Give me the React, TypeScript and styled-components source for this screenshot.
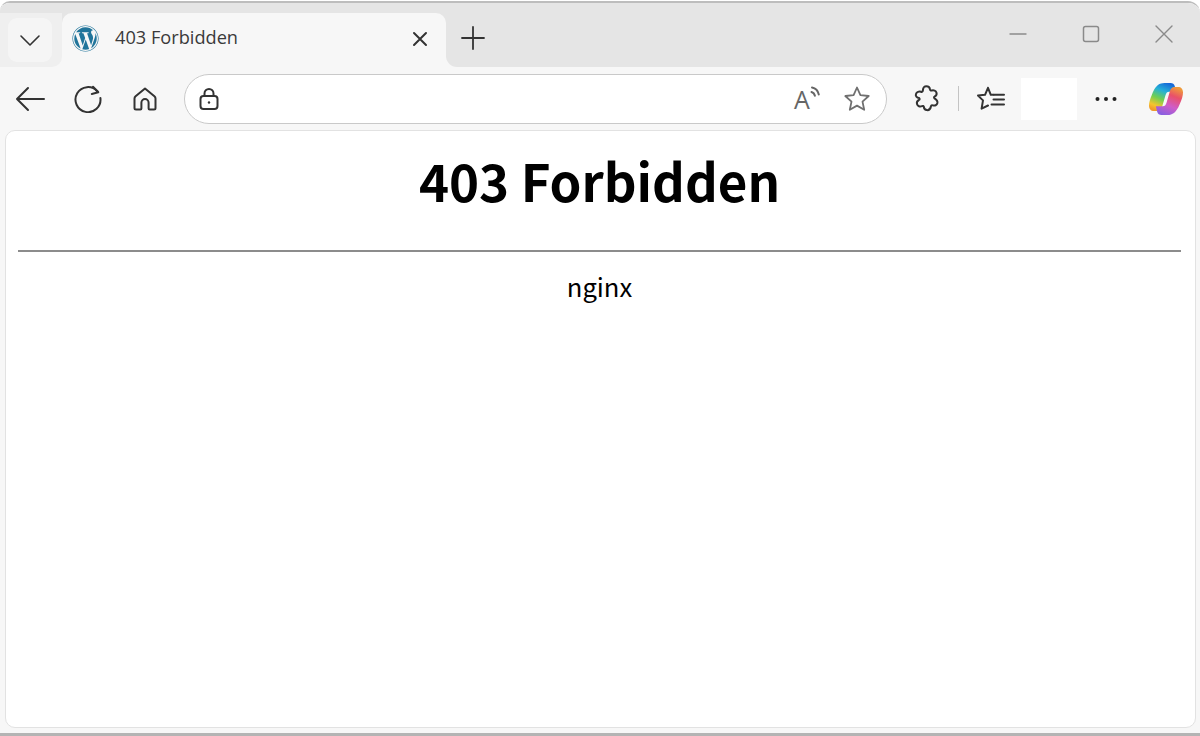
import React from "react";
import styled, { createGlobalStyle } from "styled-components";
import { FaWordpress } from "react-icons/fa";

const Global = createGlobalStyle`
  html, body { margin: 0; padding: 0; background: #ffffff; }
  * { box-sizing: border-box; }
`;

const Screen = styled.div`
  width: 1200px;
  height: 736px;
  overflow: hidden;
  display: flex;
  flex-direction: column;
  padding-top: 1px;
  background: #fff;
`;

const Window = styled.div`
  flex: 1;
  display: flex;
  flex-direction: column;
  background: #f7f7f7;
  border-top: 2px solid #bdbdbd;
  border-bottom: 3px solid #b4b4b4;
  border-radius: 10px 12px 0 0;
  overflow: hidden;
`;

const TitleBar = styled.div`
  height: 64px;
  display: flex;
  background: #f7f7f7;
`;

const Side = styled.div`
  width: 62px;
  background: linear-gradient(#e5e5e5 0 10px, #efefef 10px);
  border-bottom-right-radius: 10px;
  padding: 15px 0 0 8px;
`;

const Switcher = styled.div`
  width: 44px;
  height: 44px;
  border-radius: 9px;
  background: #f5f5f5;
  display: flex;
  align-items: center;
  justify-content: center;
`;

const TabBack = styled.div`
  width: 384px;
  background: #e5e5e5;
  padding-top: 10px;
`;

const Tab = styled.div`
  height: 54px;
  background: #f7f7f7;
  border-radius: 10px 10px 0 0;
  display: flex;
  align-items: center;
  padding: 0 17px 3px 10px;
`;

const TabTitle = styled.span`
  flex: 1;
  margin: 0 0 3px 16px;
  font: 18.2px "Open Sans", sans-serif;
  color: #3a3a3a;
`;

const Strip = styled.div`
  flex: 1;
  background: #e5e5e5;
  border-bottom-left-radius: 11px;
  display: flex;
  align-items: center;
  padding: 6px 24px 0 15px;
`;

const WinControls = styled.div`
  margin-left: auto;
  display: flex;
  gap: 49px;
  margin-bottom: 8px;
`;

const Toolbar = styled.div`
  height: 63px;
  display: flex;
  align-items: center;
  padding-left: 13px;
`;

const Slot = styled.div<{ $ml?: number }>`
  width: 34px;
  height: 34px;
  display: flex;
  align-items: center;
  justify-content: center;
  margin-left: ${(p) => p.$ml ?? 0}px;
  flex: none;
`;

const Address = styled.div`
  width: 703px;
  height: 50px;
  margin-left: 22px;
  border: 1.5px solid #c9c9c9;
  border-radius: 25px;
  background: #fff;
  display: flex;
  align-items: center;
  padding: 0 15px 0 14px;
  flex: none;
`;

const AddressEnd = styled.div`
  margin-left: auto;
  display: flex;
  align-items: center;
  gap: 21px;
`;

const ReadAloud = styled.div`
  width: 28px;
  height: 26px;
  display: flex;
`;

const ReadLetter = styled.span`
  font: 25px/26px "Open Sans", sans-serif;
  color: #666;
`;

const Divider = styled.div`
  width: 1px;
  height: 25px;
  background: #c4c4c4;
  margin-left: 15px;
  flex: none;
`;

const Blank = styled.div`
  width: 56px;
  height: 42px;
  background: #fff;
  margin-left: 13px;
  flex: none;
`;

const Page = styled.main`
  flex: 1;
  margin: 0 4px 5px 5px;
  background: #fff;
  border: 1px solid #e2e2e2;
  border-radius: 10px;
  padding: 0 14px 0 12px;
  text-align: center;
  font-family: "Noto Sans CJK JP", "Noto Sans", sans-serif;
  color: #000;
`;

const Heading = styled.h1`
  margin: 15px 0 0;
  font-size: 51px;
  line-height: 68px;
  font-weight: 700;
`;

const Rule = styled.hr`
  margin: 36px 0 0;
  border: 0;
  height: 1.5px;
  background: #8c8c8c;
`;

const Server = styled.p`
  margin: 17px 0 0;
  font-size: 25.6px;
  line-height: 34px;
`;

const Ico = styled.svg`
  display: block;
  fill: none;
  stroke: #333;
  stroke-width: 2;
  stroke-linecap: round;
  stroke-linejoin: round;
  flex: none;
`;

const Wp = styled(FaWordpress)`
  color: #21759b;
  width: 27px;
  height: 27px;
  flex: none;
`;

const Copilot = () => {
  const shape =
    "M12 .6C13 .2 14 0 15.500 0H21.500C23.800 0 25.200 1 25.800 3.200L27.200 8.700H20.200C18.200 8.700 17.200 9.700 16.500 12.200L13.200 23.500C12.400 26.500 11 28 8.500 28H5C1.800 28 0 26 0 22.500 0 19.500 1.200 15.500 3 11.500 5 6.500 7.500 1.800 12 .6Z";
  return (
    <svg width="34" height="32" viewBox="0 0 34 32" style={{ display: "block" }}>
      <defs>
        <linearGradient id="ca" x1="0.7" y1="0" x2="0.3" y2="1">
          <stop offset="0" stopColor="#1668d8" />
          <stop offset="0.3" stopColor="#25b0d8" />
          <stop offset="0.58" stopColor="#6fcf52" />
          <stop offset="0.85" stopColor="#f5c52e" />
          <stop offset="1" stopColor="#f29a2c" />
        </linearGradient>
        <linearGradient id="cb" x1="0.3" y1="1" x2="0.7" y2="0">
          <stop offset="0" stopColor="#ef9a3a" />
          <stop offset="0.3" stopColor="#e9506a" />
          <stop offset="0.65" stopColor="#cf5cc8" />
          <stop offset="1" stopColor="#8a5fe0" />
        </linearGradient>
      </defs>
      <path d={shape} fill="url(#ca)" />
      <path d={shape} fill="url(#cb)" transform="rotate(180 17 16)" />
    </svg>
  );
};

export default function App() {
  return (
    <Screen>
      <Global />
      <Window>
        <TitleBar>
          <Side>
            <Switcher>
              <Ico width="22" height="22" viewBox="0 0 22 22" style={{ strokeWidth: 1.6 }}>
                <path d="M2 7l9 9 9-9" />
              </Ico>
            </Switcher>
          </Side>
          <TabBack>
            <Tab>
              <Wp />
              <TabTitle>403 Forbidden</TabTitle>
              <Ico width="18" height="18" viewBox="0 0 18 18">
                <path d="M3 3l12 12M15 3L3 15" />
              </Ico>
            </Tab>
          </TabBack>
          <Strip>
            <Ico width="24" height="24" viewBox="0 0 24 24" style={{ strokeWidth: 1.8 }}>
              <path d="M1 12h22M12 1v22" />
            </Ico>
            <WinControls>
              <Ico width="24" height="24" viewBox="0 0 24 24" style={{ stroke: "#8a8a8a", strokeWidth: 1.4 }}>
                <path d="M4 12h16" />
              </Ico>
              <Ico width="24" height="24" viewBox="0 0 24 24" style={{ stroke: "#8a8a8a", strokeWidth: 1.5 }}>
                <rect x="4.500" y="4.500" width="15" height="15" rx="2" />
              </Ico>
              <Ico width="24" height="24" viewBox="0 0 24 24" style={{ stroke: "#8a8a8a", strokeWidth: 1.4 }}>
                <path d="M4 4l16 16M20 4L4 20" />
              </Ico>
            </WinControls>
          </Strip>
        </TitleBar>
        <Toolbar>
          <Slot>
            <Ico width="30" height="26" viewBox="0 0 30 26">
              <path d="M29 13H2M13 2L2 13l11 11" />
            </Ico>
          </Slot>
          <Slot $ml={24}>
            <Ico width="28" height="28" viewBox="0 0 28 28">
              <path d="M23.500 6.500A12.500 12.500 0 1 0 26.400 13" />
              <path d="M19 1.700l5.300 5.600-6.500 1.700" />
            </Ico>
          </Slot>
          <Slot $ml={23}>
            <Ico width="26" height="26" viewBox="0 0 26 26">
              <path d="M13 2.500L3.600 10.200c-.7.6-1.100 1.300-1.100 2.200v9.600c0 .9.7 1.500 1.500 1.500h4.400c.6 0 1-.4 1-1v-5.800a3.600 3.600 0 0 1 7.200 0v5.800c0 .6.4 1 1 1H22c.8 0 1.500-.6 1.500-1.500v-9.600c0-.9-.4-1.600-1.100-2.200z" />
            </Ico>
          </Slot>
          <Address>
            <Ico width="20" height="22" viewBox="0 0 20 22">
              <path d="M5.500 8V5.500a4.500 4.500 0 0 1 9 0V8" />
              <rect x="1.500" y="8" width="17" height="13" rx="3" />
              <circle cx="10" cy="14.500" r="1.200" fill="#333" stroke="none" />
            </Ico>
            <AddressEnd>
              <ReadAloud>
                <ReadLetter>A</ReadLetter>
                <Ico width="12" height="16" viewBox="0 0 12 16" style={{ stroke: "#666", strokeWidth: 2 }}>
                  <path d="M1.500 6c1.700.5 2.900 1.800 3.400 3.800M2 1.500c3.400.7 6 3.200 6.800 7" />
                </Ico>
              </ReadAloud>
              <Ico width="28" height="28" viewBox="0 0 28 28" style={{ stroke: "#707070", strokeWidth: 1.8 }}>
                <path d="M14 2.500l3.400 7.600 8.300.9-6.200 5.600 1.700 8.200L14 20.600l-7.200 4.200 1.700-8.200-6.200-5.600 8.300-.9z" />
              </Ico>
            </AddressEnd>
          </Address>
          <Slot $ml={22}>
            <Ico width="25" height="27" viewBox="0 0 25 27">
              <path d="M9 4.500C9 2.500 10.500 1.200 12.300 1.200S15.800 2.500 16 4.500c.1 1 .8 1.300 1.700 1 1.900-.7 4.200.2 4.800 2.200.4 1.500-.3 3-1.700 3.700-1 .5-1 1.400-.2 2.100 1.500 1 3.300 2 2.800 4.500-.5 2.200-2.600 3-4.600 2.400-1-.3-1.700.1-1.900 1.100-.4 2.200-1.800 3.900-4.100 3.600-1.800-.2-2.800-1.600-3-3.100-.1-1-.9-1.300-1.800-.9-2 .9-4.400.1-5-2.100-.5-1.800.5-3.300 1.900-4 .9-.5 1-1.300.2-2C2.800 12.900 1.200 11 2 8.900 2.700 6.900 5 6 7 6.800c1 .4 2-.2 2-2.300z" />
            </Ico>
          </Slot>
          <Divider />
          <Slot $ml={15}>
            <Ico width="28" height="26" viewBox="0 0 28 26">
              <path d="M16.500 8.800h-2.700L11 1.800 8 8.800l-7 .8 5 4.800-1.400 8.300 6.400-3.200" />
              <path d="M17 8.800h10M16.500 13.500H27M14.500 18.500H27" />
            </Ico>
          </Slot>
          <Blank />
          <Slot $ml={12}>
            <Ico width="24" height="6" viewBox="0 0 24 6" style={{ fill: "#222", stroke: "none" }}>
              <circle cx="3.500" cy="3" r="2" />
              <circle cx="12" cy="3" r="2" />
              <circle cx="20.500" cy="3" r="2" />
            </Ico>
          </Slot>
          <Slot $ml={26}>
            <Copilot />
          </Slot>
        </Toolbar>
        <Page>
          <Heading>403 Forbidden</Heading>
          <Rule />
          <Server>nginx</Server>
        </Page>
      </Window>
    </Screen>
  );
}
